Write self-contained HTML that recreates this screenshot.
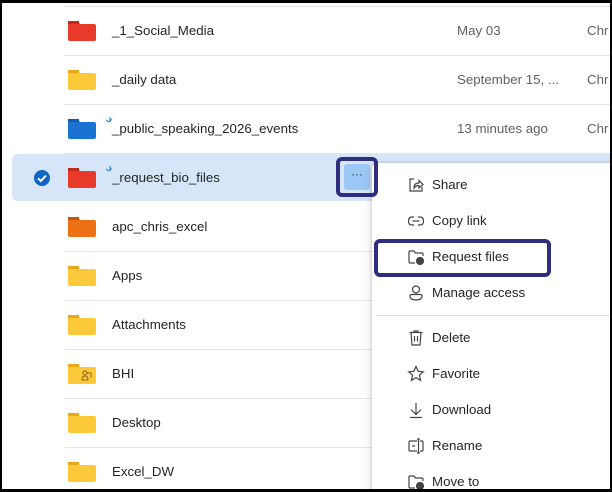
<!DOCTYPE html>
<html><head><meta charset="utf-8"><style>
*{margin:0;padding:0;box-sizing:border-box}
html{width:612px;height:492px;overflow:hidden}
body{width:612px;height:492px;overflow:hidden;background:#fff;font-family:"Liberation Sans",sans-serif;position:relative;color:#242424}
.frame{position:absolute;left:0;top:0;width:612px;height:492px;border:2px solid #000;border-top-width:3px;border-bottom-width:3px;z-index:20;pointer-events:none}
.sep{position:absolute;left:64px;right:0;height:1px;background:#e6e6e6}
.name{position:absolute;left:112px;font-size:13.3px;line-height:16px}
.date{position:absolute;left:457px;font-size:13.3px;color:#616161;line-height:16px}
.by{position:absolute;left:587px;font-size:13.3px;color:#616161;line-height:16px}
.fold{position:absolute;left:68px;width:28px;height:20px}
.sel{position:absolute;left:12px;top:154px;width:620px;height:47px;background:#d6e6f8;border-radius:6px}
.menu{position:absolute;left:372px;top:163px;width:250px;height:329px;background:#fff;border-radius:6px 6px 0 0;box-shadow:0 0 3px rgba(0,0,0,.2),0 4px 10px rgba(0,0,0,.15)}
.mi{position:absolute;left:432px;font-size:13.3px;line-height:16px;color:#242424}
.ic{position:absolute;left:407px;width:18px;height:18px}
</style></head><body>
<div class="sep" style="top:6px"></div>
<div class="sep" style="top:55px"></div>
<div class="sep" style="top:104px"></div>
<div class="sep" style="top:153px"></div>
<div class="sep" style="top:251px"></div>
<div class="sep" style="top:300px"></div>
<div class="sep" style="top:349px"></div>
<div class="sep" style="top:398px"></div>
<div class="sep" style="top:447px"></div>
<div class="sel"></div>

<svg class="fold" style="top:21px" viewBox="0 0 28 20"><path d="M0 2Q0 0 2 0H10L12 3H26Q28 3 28 5V18Q28 20 26 20H2Q0 20 0 18Z" fill="#e8392a"/><rect x="0" y="0" width="11" height="3" fill="#c42a1c"/></svg>
<div class="name" style="top:23px">_1_Social_Media</div><div class="date" style="top:23px">May 03</div><div class="by" style="top:23px">Chr</div>

<svg class="fold" style="top:70px" viewBox="0 0 28 20"><path d="M0 2Q0 0 2 0H10L12 3H26Q28 3 28 5V18Q28 20 26 20H2Q0 20 0 18Z" fill="#fcc93a"/><rect x="0" y="0" width="11" height="3" fill="#e9a81a"/></svg>
<div class="name" style="top:72px">_daily data</div><div class="date" style="top:72px">September 15, ...</div><div class="by" style="top:72px">Chr</div>

<svg class="fold" style="top:119px" viewBox="0 0 28 20"><path d="M0 2Q0 0 2 0H10L12 3H26Q28 3 28 5V18Q28 20 26 20H2Q0 20 0 18Z" fill="#1a73d0"/><rect x="0" y="0" width="11" height="3" fill="#0f5ca8"/></svg>
<svg style="position:absolute;left:105px;top:116px" width="8" height="8"><path d="M1 4 L4 6 M5 1 L5 6 M4 6 L7 3" stroke="#3a8ad8" stroke-width="1.2" fill="none"/></svg>
<div class="name" style="top:121px">_public_speaking_2026_events</div><div class="date" style="top:121px">13 minutes ago</div><div class="by" style="top:121px">Chr</div>

<svg style="position:absolute;left:33px;top:169px" width="18" height="18" viewBox="0 0 18 18"><circle cx="9" cy="9" r="8" fill="#1066c5"/><path d="M5 9.3L7.8 12L13 6.5" stroke="#fff" stroke-width="2" fill="none"/></svg>
<svg class="fold" style="top:168px" viewBox="0 0 28 20"><path d="M0 2Q0 0 2 0H10L12 3H26Q28 3 28 5V18Q28 20 26 20H2Q0 20 0 18Z" fill="#e8392a"/><rect x="0" y="0" width="11" height="3" fill="#c42a1c"/></svg>
<svg style="position:absolute;left:105px;top:165px" width="8" height="8"><path d="M1 4 L4 6 M5 1 L5 6 M4 6 L7 3" stroke="#3a8ad8" stroke-width="1.2" fill="none"/></svg>
<div class="name" style="top:170px">_request_bio_files</div>

<svg class="fold" style="top:217px" viewBox="0 0 28 20"><path d="M0 2Q0 0 2 0H10L12 3H26Q28 3 28 5V18Q28 20 26 20H2Q0 20 0 18Z" fill="#ee7014"/><rect x="0" y="0" width="11" height="3" fill="#c2560a"/></svg>
<div class="name" style="top:219px">apc_chris_excel</div>

<svg class="fold" style="top:266px" viewBox="0 0 28 20"><path d="M0 2Q0 0 2 0H10L12 3H26Q28 3 28 5V18Q28 20 26 20H2Q0 20 0 18Z" fill="#fcc93a"/><rect x="0" y="0" width="11" height="3" fill="#e9a81a"/></svg>
<div class="name" style="top:268px">Apps</div>
<svg class="fold" style="top:315px" viewBox="0 0 28 20"><path d="M0 2Q0 0 2 0H10L12 3H26Q28 3 28 5V18Q28 20 26 20H2Q0 20 0 18Z" fill="#fcc93a"/><rect x="0" y="0" width="11" height="3" fill="#e9a81a"/></svg>
<div class="name" style="top:317px">Attachments</div>
<svg class="fold" style="top:364px" viewBox="0 0 28 20"><path d="M0 2Q0 0 2 0H10L12 3H26Q28 3 28 5V18Q28 20 26 20H2Q0 20 0 18Z" fill="#fcc93a"/><rect x="0" y="0" width="11" height="3" fill="#e9a81a"/><circle cx="17" cy="9" r="2" fill="none" stroke="#8a6a10"/><path d="M14 16Q14 12 17 12Q20 12 20 16Z M19 9h4v5" fill="none" stroke="#8a6a10"/></svg>
<div class="name" style="top:366px">BHI</div>
<svg class="fold" style="top:413px" viewBox="0 0 28 20"><path d="M0 2Q0 0 2 0H10L12 3H26Q28 3 28 5V18Q28 20 26 20H2Q0 20 0 18Z" fill="#fcc93a"/><rect x="0" y="0" width="11" height="3" fill="#e9a81a"/></svg>
<div class="name" style="top:415px">Desktop</div>
<svg class="fold" style="top:462px" viewBox="0 0 28 20"><path d="M0 2Q0 0 2 0H10L12 3H26Q28 3 28 5V18Q28 20 26 20H2Q0 20 0 18Z" fill="#fcc93a"/><rect x="0" y="0" width="11" height="3" fill="#e9a81a"/></svg>
<div class="name" style="top:464px">Excel_DW</div>

<div style="position:absolute;left:344px;top:164px;width:26px;height:26px;background:#9cc8f5;border-radius:3px;text-align:center;font-size:12px;line-height:20px;color:#333">···</div>
<div style="position:absolute;left:336px;top:157px;width:42px;height:40px;border:4px solid #2f2d7d;border-radius:6px;z-index:5"></div>

<div class="menu"></div>
<svg class="ic" style="top:176px" viewBox="0 0 18 18" fill="none" stroke="#444" stroke-width="1.2"><path d="M7 3H3V15H15V11"/><path d="M7 12Q7 7 12 7V4.5L16 8.5L12 12V9.5Q9 9.5 7 12Z"/></svg>
<div class="mi" style="top:177px">Share</div>
<svg class="ic" style="top:212px" viewBox="0 0 18 18" fill="none" stroke="#444" stroke-width="1.2"><path d="M7 5H5Q1.5 5 1.5 9Q1.5 13 5 13H7M11 5H13Q16.5 5 16.5 9Q16.5 13 13 13H11M5.5 9H12.5"/></svg>
<div class="mi" style="top:213px">Copy link</div>
<svg class="ic" style="top:248px" viewBox="0 0 18 18" fill="none" stroke="#444" stroke-width="1.2"><path d="M8 15H3Q2 15 2 14V4Q2 3 3 3H7L8.5 5H15Q16 5 16 6V8"/><circle cx="13" cy="13" r="3.5" fill="#444"/></svg>
<div class="mi" style="top:249px">Request files</div>
<svg class="ic" style="top:284px" viewBox="0 0 18 18" fill="none" stroke="#444" stroke-width="1.2"><circle cx="9" cy="5.5" r="3.5"/><path d="M3 12Q3 10.5 5 10.5H13Q15 10.5 15 12Q15 16 9 16Q3 16 3 12Z"/></svg>
<div class="mi" style="top:285px">Manage access</div>
<div style="position:absolute;left:376px;top:315px;width:240px;height:1px;background:#e0e0e0"></div>
<svg class="ic" style="top:329px" viewBox="0 0 18 18" fill="none" stroke="#444" stroke-width="1.2"><path d="M2.5 3.5H15.5M7 3.5V2H11V3.5M4 3.5L5 16H13L14 3.5M7.5 7V12.5M10.5 7V12.5"/></svg>
<div class="mi" style="top:330px">Delete</div>
<svg class="ic" style="top:365px" viewBox="0 0 18 18" fill="none" stroke="#444" stroke-width="1.2"><path d="M9 1.5L11.2 6.3L16.3 6.8L12.4 10.2L13.6 15.4L9 12.7L4.4 15.4L5.6 10.2L1.7 6.8L6.8 6.3Z"/></svg>
<div class="mi" style="top:366px">Favorite</div>
<svg class="ic" style="top:401px" viewBox="0 0 18 18" fill="none" stroke="#444" stroke-width="1.2"><path d="M9 2V13M4 8.5L9 13.5L14 8.5M3 16.5H15"/></svg>
<div class="mi" style="top:402px">Download</div>
<svg class="ic" style="top:437px" viewBox="0 0 18 18" fill="none" stroke="#444" stroke-width="1.2"><path d="M10 4H3Q2 4 2 5V13Q2 14 3 14H10M13 4H15Q16 4 16 5V13Q16 14 15 14H13M11.5 2V16M10 2H13M10 16H13M5 9H8"/></svg>
<div class="mi" style="top:438px">Rename</div>
<svg class="ic" style="top:473px" viewBox="0 0 18 18" fill="none" stroke="#444" stroke-width="1.2"><path d="M8 15H3Q2 15 2 14V4Q2 3 3 3H7L8.5 5H15Q16 5 16 6V8"/><circle cx="13" cy="13" r="3.5" fill="#444"/></svg>
<div class="mi" style="top:474px">Move to</div>

<div style="position:absolute;left:374px;top:239px;width:177px;height:38px;border:4px solid #2f2d7d;border-radius:6px;z-index:5"></div>
<div class="frame"></div>
</body></html>
